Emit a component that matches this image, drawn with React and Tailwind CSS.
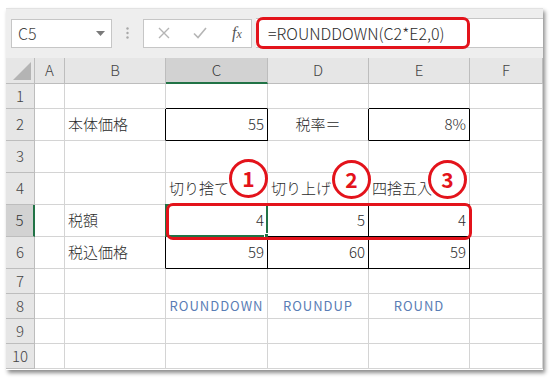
import React from 'react';

const cols = [
    { key: 'A', width: 30 },
    { key: 'B', width: 101 },
    { key: 'C', width: 102 },
    { key: 'D', width: 101 },
    { key: 'E', width: 101 },
    { key: 'F', width: 73 },
];

const rowHeights = [25, 32, 32, 32, 32, 32, 25, 25, 25, 25];

// cell contents: [text, align, tone]
const cells = {
    B2: ['本体価格', 'left'],
    C2: ['55', 'right'],
    D2: ['税率＝', 'center'],
    E2: ['8%', 'right'],
    C4: ['切り捨て', 'left'],
    D4: ['切り上げ', 'left'],
    E4: ['四捨五入', 'left'],
    B5: ['税額', 'left'],
    C5: ['4', 'right'],
    D5: ['5', 'right'],
    E5: ['4', 'right'],
    B6: ['税込価格', 'left'],
    C6: ['59', 'right'],
    D6: ['60', 'right'],
    E6: ['59', 'right'],
    C8: ['ROUNDDOWN', 'center', 'fn'],
    D8: ['ROUNDUP', 'center', 'fn'],
    E8: ['ROUND', 'center', 'fn'],
};

// cells framed with a black border
const boxed = new Set(['C2', 'E2', 'C5', 'D5', 'E5', 'C6', 'D6', 'E6']);
const colKeys = cols.map((c) => c.key);

const inBox = (ci, r) => {
    const k = colKeys[ci];
    return k !== undefined && boxed.has(`${k}${r}`);
};

const Cell = ({ ci, r }) => {
    const key = `${colKeys[ci]}${r}`;
    const content = cells[key];
    const rightDark = inBox(ci, r) || inBox(ci + 1, r);
    const bottomDark = inBox(ci, r) || inBox(ci, r + 1);
    const align = content?.[1];

    return (
        <div
            className={`relative flex items-center bg-white border-r border-b ${
                rightDark ? 'border-r-black' : 'border-r-[#d4d4d4]'
            } ${bottomDark ? 'border-b-black' : 'border-b-[#d4d4d4]'} ${
                align === 'right' ? 'justify-end pr-[3px]' : align === 'center' ? 'justify-center' : 'pl-[3px]'
            }`}
        >
            {key === 'C5' && (
                <div className="absolute -left-px -top-px -right-px -bottom-px border-2 border-[#217346]">
                    <div className="absolute -right-[4px] -bottom-[4px] w-[6px] h-[6px] bg-[#217346] border border-white" />
                </div>
            )}
            {content && (
                <span
                    className={`relative whitespace-nowrap ${
                        content[2] === 'fn'
                            ? 'text-[13px] tracking-[1px] text-[#5a7db5]'
                            : 'text-[15px] font-light text-[#2b2b2b]'
                    }`}
                >
                    {content[0]}
                </span>
            )}
        </div>
    );
};

const Badge = ({ n, className }) => (
    <div
        className={`absolute w-[39px] h-[39px] rounded-full border-[3px] border-[#e3131b] bg-white flex items-center justify-center text-[#e3131b] text-[21px] font-bold leading-none ${className}`}
    >
        {n}
    </div>
);

export default function App() {
    return (
        <div
            className="w-[554px] h-[380px] bg-white pl-[6px] pt-[8px]"
            style={{ fontFamily: '"Noto Sans CJK JP", "Noto Sans", sans-serif' }}
        >
            <div className="w-[537px] h-[362px] flex flex-col bg-white shadow-[2px_3px_4px_rgba(0,0,0,0.45)]">
                {/* Formula bar */}
                <div className="h-[50px] bg-[#eeeeee] flex items-center pl-[5px] pb-[1px] border-t border-[#e2e2e2]">
                    <div className="w-[101px] h-[29px] bg-white border border-[#c6c6c6] flex items-center justify-between pl-[6px] pr-[6px]">
                        <span className="text-[16px] font-light text-[#444444]">C5</span>
                        <svg width="9" height="5" viewBox="0 0 9 5">
                            <path d="M0 0h9L4.5 5z" fill="#7a7a7a" />
                        </svg>
                    </div>
                    <div className="w-[31px] flex justify-center">
                        <svg width="3" height="12" viewBox="0 0 3 12">
                            <circle cx="1.5" cy="1.5" r="1.2" fill="#a8a8a8" />
                            <circle cx="1.5" cy="6" r="1.2" fill="#a8a8a8" />
                            <circle cx="1.5" cy="10.5" r="1.2" fill="#a8a8a8" />
                        </svg>
                    </div>
                    <div className="w-[109px] h-[29px] bg-white border border-[#c6c6c6] flex items-center pl-[14px] gap-[23px]">
                        <svg width="12" height="12" viewBox="0 0 12 12">
                            <path d="M1 1l10 10M11 1L1 11" stroke="#b5b5b5" strokeWidth="1.4" />
                        </svg>
                        <svg width="14" height="12" viewBox="0 0 14 12">
                            <path d="M1 6.5l4 4L13 1" stroke="#b5b5b5" strokeWidth="1.6" fill="none" />
                        </svg>
                        <span
                            className="ml-[2px] text-[16px] italic text-[#555555] leading-none"
                            style={{ fontFamily: '"Liberation Serif", serif' }}
                        >
                            f<span className="text-[12px]">x</span>
                        </span>
                    </div>
                    <div className="flex-1 ml-[4px] h-[30px] bg-white border-y border-[#c6c6c6] flex">
                        <div className="w-[214px] h-[32px] -mt-[2px] rounded-[7px] border-[3px] border-[#e3131b] flex items-center pl-[9px]">
                            <span className="text-[16px] font-light text-[#2b2b2b] whitespace-nowrap">=ROUNDDOWN(C2*E2,0)</span>
                        </div>
                    </div>
                </div>

                {/* Sheet */}
                <div className="relative">
                    <div
                        className="grid"
                        style={{
                            gridTemplateColumns: `29px ${cols.map((c) => `${c.width}px`).join(' ')}`,
                            gridTemplateRows: `26px ${rowHeights.map((h) => `${h}px`).join(' ')}`,
                        }}
                    >
                        {/* corner */}
                        <div className="relative bg-[#e6e6e6] border-r border-b border-[#bdbdbd]">
                            <svg className="absolute right-[3px] bottom-[3px]" width="18" height="18" viewBox="0 0 18 18">
                                <path d="M18 0V18H0z" fill="#b4b4b4" />
                            </svg>
                        </div>
                        {cols.map((c) => (
                            <div
                                key={c.key}
                                className={`flex items-center justify-center text-[15px] font-light border-r ${
                                    c.key === 'C'
                                        ? 'bg-[#d2d2d2] border-b-2 border-b-[#217346] border-r-[#bdbdbd] text-[#333333]'
                                        : 'bg-[#e6e6e6] border-b border-[#bdbdbd] text-[#444444]'
                                }`}
                            >
                                {c.key}
                            </div>
                        ))}
                        {rowHeights.map((h, i) => {
                            const r = i + 1;
                            return (
                                <React.Fragment key={r}>
                                    <div
                                        className={`flex items-center justify-center text-[15px] font-light border-b ${
                                            r === 5
                                                ? 'bg-[#d2d2d2] border-r-2 border-r-[#217346] border-b-[#bdbdbd] text-[#333333]'
                                                : 'bg-[#e6e6e6] border-r border-[#bdbdbd] text-[#444444]'
                                        }`}
                                    >
                                        {r}
                                    </div>
                                    {cols.map((c, ci) => (
                                        <Cell key={c.key} ci={ci} r={r} />
                                    ))}
                                </React.Fragment>
                            );
                        })}
                    </div>

                    {/* annotations */}
                    <div className="absolute left-[160px] top-[145px] w-[306px] h-[37px] rounded-[7px] border-[3px] border-[#e3131b]" />
                    <Badge n="1" className="left-[223px] top-[101px]" />
                    <Badge n="2" className="left-[326px] top-[102px]" />
                    <Badge n="3" className="left-[422px] top-[102px]" />
                </div>
            </div>
        </div>
    );
}
